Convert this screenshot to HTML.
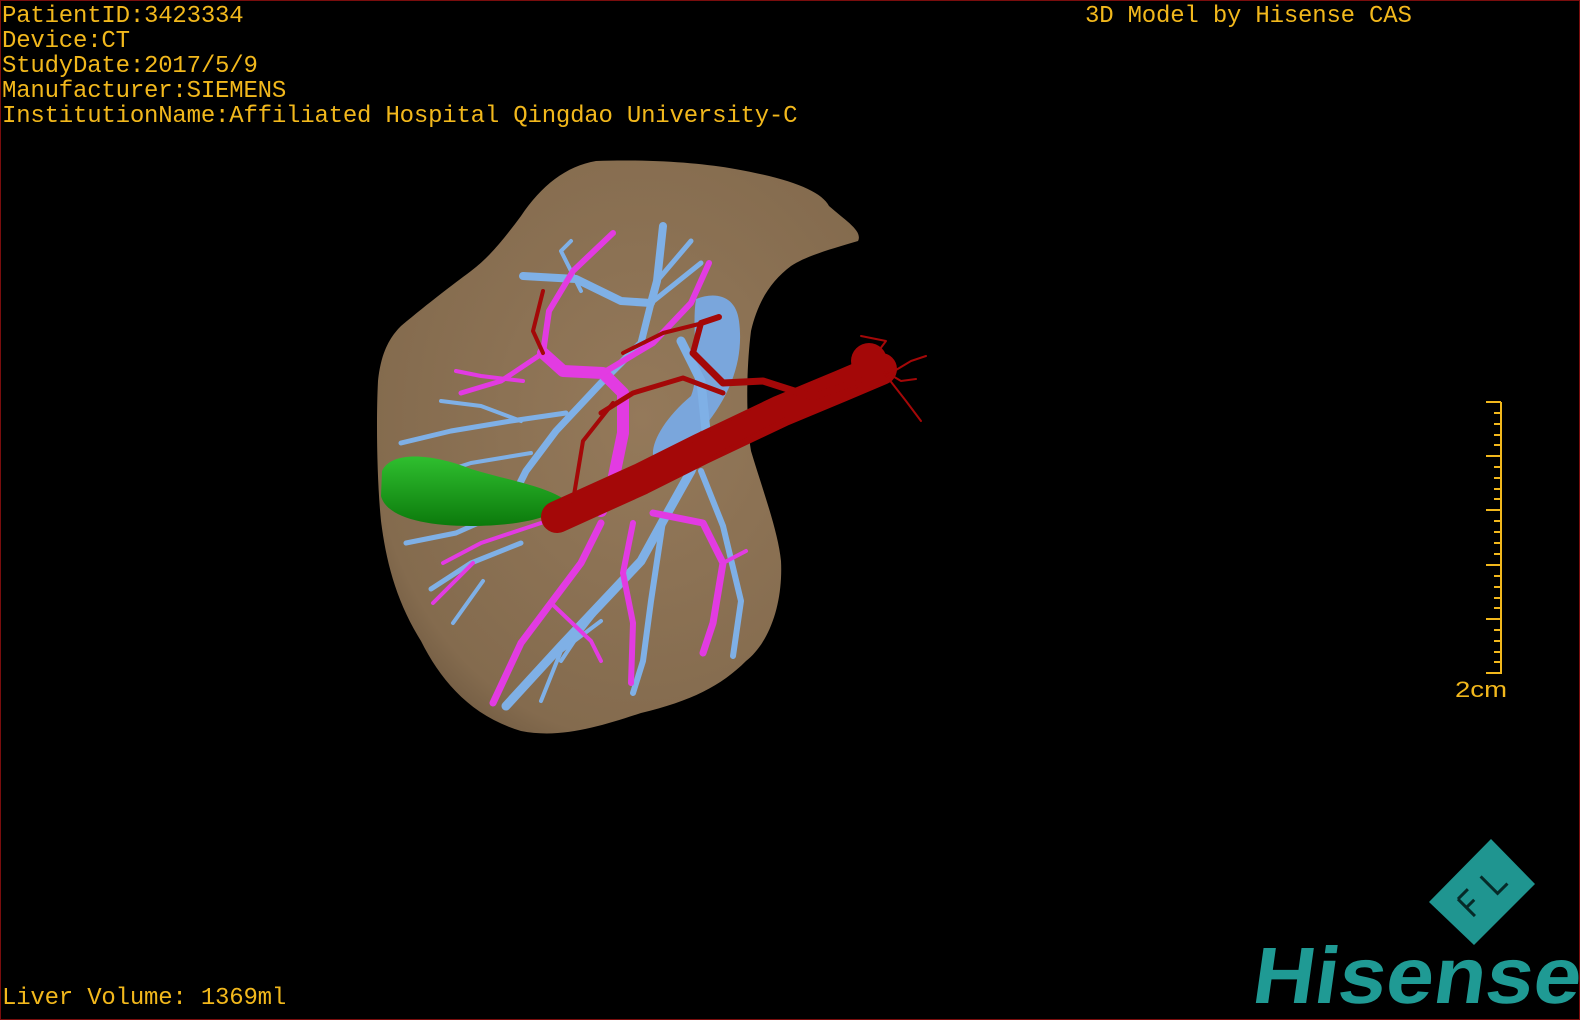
<!DOCTYPE html>
<html><head><meta charset="utf-8"><style>
html,body{margin:0;padding:0;background:#000;}
#w{position:relative;width:1580px;height:1020px;overflow:hidden;background:#000;box-sizing:border-box;border:1px solid #7a0d0d;}
.t{position:absolute;font-family:"Liberation Mono",monospace;font-size:24px;color:#f2b81c;line-height:25px;white-space:pre;letter-spacing:-0.2px;}
svg{position:absolute;left:0;top:0;}
</style></head><body><div id="w">
<svg width="1580" height="1020" viewBox="0 0 1580 1020">
<defs>
<radialGradient id="lv" cx="0.55" cy="0.45" r="0.7"><stop offset="0" stop-color="#94795a"/><stop offset="0.8" stop-color="#846b4e"/><stop offset="1" stop-color="#64503a"/></radialGradient>
<linearGradient id="gb" x1="0" y1="0" x2="0" y2="1"><stop offset="0" stop-color="#2fbf2f"/><stop offset="1" stop-color="#0c7a0c"/></linearGradient>
</defs>
<path d="M595,160 C650,158 700,162 734,168 C790,178 820,190 828,205 C845,220 862,230 857,240 C830,248 805,255 790,265 C770,280 757,300 750,330 C745,370 745,420 750,450 C762,490 777,530 780,560 C782,600 770,640 745,660 C720,685 690,700 640,712 C600,725 560,738 520,730 C470,715 440,680 420,640 C395,600 385,560 380,520 C376,480 375,420 377,380 C380,350 390,335 400,325 C430,300 450,285 470,270 C490,255 505,235 520,215 C540,185 565,165 595,160 Z" fill="url(#lv)"/>
<path d="M695,298 C715,290 735,295 738,320 C742,350 735,380 715,410 C695,440 670,460 655,462 C645,450 660,420 690,395 C700,370 690,330 695,298 Z" fill="#7aa6dc"/>
<g fill="none" stroke="#7fb0e6" stroke-linecap="round" stroke-linejoin="round">
<polyline stroke-width="9" points="505,705 560,645 610,592 640,560 662,520 690,470 705,430 700,380 680,340"/>
<polyline stroke-width="6" points="662,520 650,600 642,660 632,692"/>
<polyline stroke-width="6" points="700,470 722,525 740,600 732,655"/>
<polyline stroke-width="8" points="662,225 656,280 650,302 620,300 575,278 522,275"/>
<polyline stroke-width="5" points="650,302 700,262"/>
<polyline stroke-width="5" points="656,280 690,240"/>
<polyline stroke-width="7" points="650,302 640,342 600,382 555,430 525,470 510,500"/>
<polyline stroke-width="5" points="400,442 450,430 510,420 565,412"/>
<polyline stroke-width="4" points="420,478 470,462 530,452"/>
<polyline stroke-width="4" points="440,400 480,405 520,420"/>
<polyline stroke-width="5" points="405,542 455,532 500,512 545,502"/>
<polyline stroke-width="5" points="430,588 470,562 520,542"/>
<polyline stroke-width="4" points="452,622 482,580"/>
<polyline stroke-width="4" points="540,700 560,650 600,620"/>
<polyline stroke-width="4" points="580,290 560,250 570,240"/>
<polyline stroke-width="4" points="610,592 580,630 560,660"/>
</g>
<path d="M381,470 C390,450 430,452 470,468 C510,480 545,485 566,500 C560,515 520,525 470,525 C420,525 385,515 380,495 Z" fill="url(#gb)"/>
<g fill="none" stroke="#e23be2" stroke-linecap="round" stroke-linejoin="round">
<polyline stroke-width="6" points="612,232 572,270 548,310 542,352"/>
<polyline stroke-width="12" points="542,352 562,370 602,372 622,392 622,432 612,480 600,510"/>
<polyline stroke-width="6" points="602,372 652,342 690,302 708,262"/>
<polyline stroke-width="5" points="542,352 500,380 460,392"/>
<polyline stroke-width="4" points="522,380 480,375 455,370"/>
<polyline stroke-width="7" points="600,522 580,562 550,602 520,642 492,702"/>
<polyline stroke-width="6" points="632,522 622,572 632,622 630,682"/>
<polyline stroke-width="7" points="652,512 702,522 722,562 712,622 702,652"/>
<polyline stroke-width="4" points="540,522 480,542 442,562"/>
<polyline stroke-width="4" points="472,562 432,602"/>
<polyline stroke-width="4" points="550,602 590,640 600,660"/>
<polyline stroke-width="4" points="722,562 745,550"/>
</g>
<g fill="none" stroke="#a40808" stroke-linecap="round" stroke-linejoin="round">
<polyline stroke-width="32" points="556,516 640,478 700,448 780,410 840,385 880,368"/>
<polyline stroke-width="22" points="700,448 780,406 850,378"/>
<polyline stroke-width="5" points="600,412 632,392 682,377 722,392"/>
<polyline stroke-width="6" points="692,352 700,322 718,316"/>
<polyline stroke-width="7" points="692,352 722,382 762,380 812,396 852,382"/>
<polyline stroke-width="4" points="572,500 582,440 612,402"/>
<polyline stroke-width="4" points="542,290 532,330 542,352"/>
<polyline stroke-width="4" points="622,352 662,332 702,322"/>
<polyline stroke-width="2" points="880,368 900,380 915,378"/>
<polyline stroke-width="2" points="880,368 905,400 920,420"/>
<polyline stroke-width="2" points="870,360 885,340 860,335"/>
<polyline stroke-width="2" points="885,375 910,360 925,355"/>
</g>
<circle cx="868" cy="360" r="18" fill="#a40808"/>
<g stroke="#f2b81c" stroke-width="2">
<line x1="1500" y1="401" x2="1500" y2="673"/>
<line x1="1485" y1="401" x2="1500" y2="401"/>
<line x1="1485" y1="455" x2="1500" y2="455"/>
<line x1="1485" y1="509" x2="1500" y2="509"/>
<line x1="1485" y1="564" x2="1500" y2="564"/>
<line x1="1485" y1="618" x2="1500" y2="618"/>
<line x1="1485" y1="672" x2="1500" y2="672"/>
<line x1="1493" y1="412" x2="1500" y2="412"/><line x1="1493" y1="423" x2="1500" y2="423"/><line x1="1493" y1="434" x2="1500" y2="434"/><line x1="1493" y1="444" x2="1500" y2="444"/>
<line x1="1493" y1="466" x2="1500" y2="466"/><line x1="1493" y1="477" x2="1500" y2="477"/><line x1="1493" y1="488" x2="1500" y2="488"/><line x1="1493" y1="498" x2="1500" y2="498"/>
<line x1="1493" y1="520" x2="1500" y2="520"/><line x1="1493" y1="531" x2="1500" y2="531"/><line x1="1493" y1="542" x2="1500" y2="542"/><line x1="1493" y1="553" x2="1500" y2="553"/>
<line x1="1493" y1="575" x2="1500" y2="575"/><line x1="1493" y1="586" x2="1500" y2="586"/><line x1="1493" y1="597" x2="1500" y2="597"/><line x1="1493" y1="607" x2="1500" y2="607"/>
<line x1="1493" y1="629" x2="1500" y2="629"/><line x1="1493" y1="640" x2="1500" y2="640"/><line x1="1493" y1="651" x2="1500" y2="651"/><line x1="1493" y1="661" x2="1500" y2="661"/>
</g>
<text x="1454" y="696" font-family="Liberation Sans,sans-serif" font-size="22" fill="#f2b81c" textLength="52" lengthAdjust="spacingAndGlyphs">2cm</text>
<polygon points="1490,838 1534,883 1473,944 1428,901" fill="#1f9590"/>
<g transform="translate(1481,891) rotate(-45)" stroke="#062a28" stroke-width="3" fill="none">
<polyline points="-22,-12 -22,12"/><polyline points="-22,-12 -8,-12"/><polyline points="-22,0 -11,0"/>
<polyline points="10,-12 10,12 24,12"/>
</g>
<text x="1250" y="1002" font-family="Liberation Sans,sans-serif" font-weight="bold" font-size="80" fill="#1f9a94" transform="skewX(-8) translate(140,0)" textLength="328" lengthAdjust="spacingAndGlyphs">Hisense</text>
</svg>
<div class="t" style="left:1px;top:3px;">PatientID:3423334
Device:CT
StudyDate:2017/5/9
Manufacturer:SIEMENS
InstitutionName:Affiliated Hospital Qingdao University-C</div>
<div class="t" style="left:1084px;top:3px;">3D Model by Hisense CAS</div>
<div class="t" style="left:1px;top:985px;">Liver Volume: 1369ml</div>
</div></body></html>
